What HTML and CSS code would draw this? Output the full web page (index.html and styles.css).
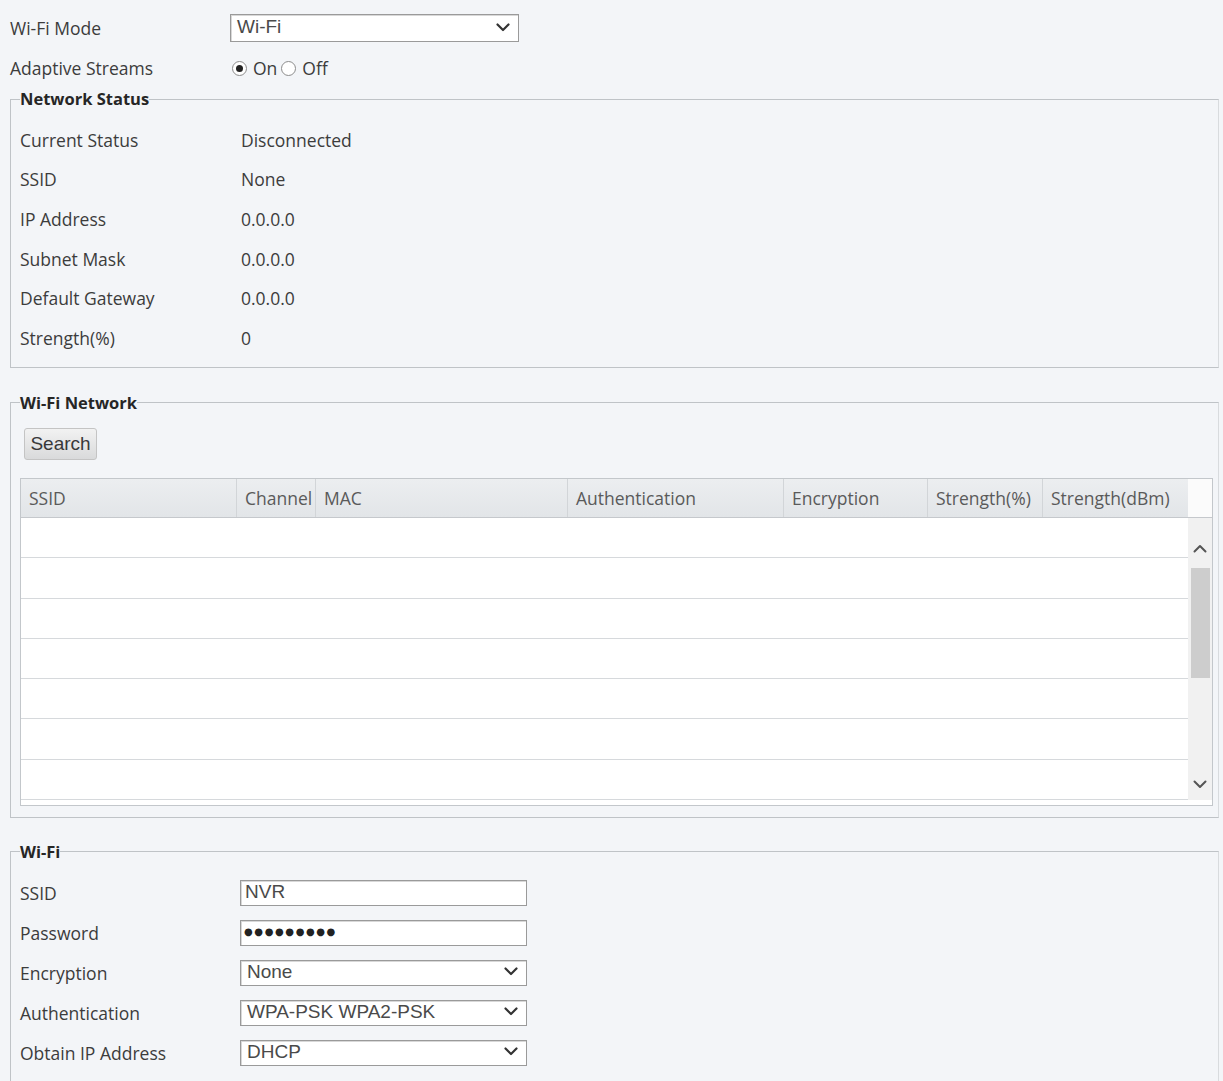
FILE: index.html
```html
<!DOCTYPE html>
<html lang="en">
    <head>
        <meta charset="UTF-8">
        <title>Wi-Fi</title>
        <link rel="stylesheet" href="styles.css">
    </head>
    <body>

        <div class="page">

            <div class="line">
                <span class="label">Wi-Fi Mode</span>
                <div class="field select wide">
                    <span>Wi-Fi</span>
                    <svg class="chev" width="14" height="9" viewBox="0 0 14 9"><polyline points="1.5,1.5 7,7 12.5,1.5"/></svg>
                </div>
            </div>

            <div class="line radios">
                <span class="label">Adaptive Streams</span>
                <span class="radio on"></span><span class="opt">On</span>
                <span class="radio"></span><span class="opt">Off</span>
            </div>

            <fieldset class="box">
                <legend>Network Status</legend>
                <div class="row"><span class="label">Current Status</span><span class="value">Disconnected</span></div>
                <div class="row"><span class="label">SSID</span><span class="value">None</span></div>
                <div class="row"><span class="label">IP Address</span><span class="value">0.0.0.0</span></div>
                <div class="row"><span class="label">Subnet Mask</span><span class="value">0.0.0.0</span></div>
                <div class="row"><span class="label">Default Gateway</span><span class="value">0.0.0.0</span></div>
                <div class="row"><span class="label">Strength(%)</span><span class="value">0</span></div>
            </fieldset>

            <fieldset class="box net">
                <legend>Wi-Fi Network</legend>
                <button class="btn">Search</button>

                <div class="grid">
                    <div class="grid-head">
                        <div class="c1">SSID</div>
                        <div class="c2">Channel</div>
                        <div class="c3">MAC</div>
                        <div class="c4">Authentication</div>
                        <div class="c5">Encryption</div>
                        <div class="c6">Strength(%)</div>
                        <div class="c7">Strength(dBm)</div>
                        <div class="c8"></div>
                    </div>
                    <div class="grid-body">
                        <div class="rows">
                            <div class="r"></div>
                            <div class="r"></div>
                            <div class="r"></div>
                            <div class="r"></div>
                            <div class="r"></div>
                            <div class="r"></div>
                            <div class="r"></div>
                        </div>
                        <div class="scroll">
                            <div class="arrow up">
                                <svg width="14" height="9" viewBox="0 0 14 9"><polyline points="1.5,7.5 7,2 12.5,7.5"/></svg>
                            </div>
                            <div class="thumb"></div>
                            <div class="track"></div>
                            <div class="arrow down">
                                <svg width="14" height="9" viewBox="0 0 14 9"><polyline points="1.5,1.5 7,7 12.5,1.5"/></svg>
                            </div>
                        </div>
                    </div>
                </div>
            </fieldset>

            <fieldset class="box wifi">
                <legend>Wi-Fi</legend>
                <div class="row">
                    <span class="label">SSID</span>
                    <div class="field text">NVR</div>
                </div>
                <div class="row">
                    <span class="label">Password</span>
                    <div class="field text pwd">●●●●●●●●●</div>
                </div>
                <div class="row">
                    <span class="label">Encryption</span>
                    <div class="field select">
                        <span>None</span>
                        <svg class="chev" width="14" height="9" viewBox="0 0 14 9"><polyline points="1.5,1.5 7,7 12.5,1.5"/></svg>
                    </div>
                </div>
                <div class="row">
                    <span class="label">Authentication</span>
                    <div class="field select">
                        <span>WPA-PSK WPA2-PSK</span>
                        <svg class="chev" width="14" height="9" viewBox="0 0 14 9"><polyline points="1.5,1.5 7,7 12.5,1.5"/></svg>
                    </div>
                </div>
                <div class="row">
                    <span class="label">Obtain IP Address</span>
                    <div class="field select">
                        <span>DHCP</span>
                        <svg class="chev" width="14" height="9" viewBox="0 0 14 9"><polyline points="1.5,1.5 7,7 12.5,1.5"/></svg>
                    </div>
                </div>
            </fieldset>

        </div>

    </body>
</html>
```

FILE: styles.css
```css
body {
    margin: 0;
    background: #f3f5f8;
    font-family: 'Open Sans', 'Segoe UI', sans-serif;
    font-size: 17.5px;
    color: #3c3c3c;
    overflow: hidden;
}
.page {
    padding: 14px 4px 0 10px;
}
.line {
    display: flex;
    align-items: center;
    height: 28px;
}
.line .label {
    width: 220px;
}
.radios {
    height: 26px;
    margin-top: 13px;
}
.radio {
    box-sizing: border-box;
    width: 15px;
    height: 15px;
    border: 1px solid #8c8c8c;
    border-radius: 50%;
    background: #fff;
    display: inline-flex;
    align-items: center;
    justify-content: center;
    margin: 0 6px 0 2px;
}
.radio.on::after {
    content: "";
    width: 7px;
    height: 7px;
    border-radius: 50%;
    background: #222;
}
.opt {
    margin-right: 2px;
}

.field {
    box-sizing: border-box;
    width: 287px;
    height: 26px;
    background: #fff;
    border: 1px solid #9a9a9a;
    box-shadow: inset 1px 1px 0 #d8d8d8;
    font-family: 'Liberation Sans', Arial, sans-serif;
    font-size: 19px;
    color: #4a4a4a;
    display: flex;
    align-items: center;
    padding: 0 6px 2px 4px;
}
.field.wide {
    width: 289px;
    height: 28px;
}
.select {
    justify-content: space-between;
    padding-left: 6px;
}
.chev {
    margin-right: 2px;
}
.chev polyline, .arrow polyline {
    fill: none;
    stroke: #333;
    stroke-width: 2.2;
    stroke-linecap: round;
    stroke-linejoin: round;
}
.pwd {
    font-family: 'DejaVu Sans', sans-serif;
    font-size: 10px;
    letter-spacing: 1.6px;
    color: #222;
    padding-left: 3px;
}

.box {
    margin: 7px 0 0 0;
    padding: 0 5px 9px 9px;
    border: 1px solid #bfc3c7;
    border-right-color: #d8dbde;
}
.box legend {
    font-size: 16.5px;
    font-weight: bold;
    color: #262626;
    padding: 0;
    margin-left: 0;
    line-height: 22px;
}
.box + .box {
    margin-top: 24px;
}
.box.net {
    padding-bottom: 11px;
}
.box.wifi {
    margin-top: 23px;
    padding-bottom: 20px;
}
.row {
    display: flex;
    align-items: center;
    height: 39.6px;
}
.box > .row:first-of-type {
    margin-top: 10px;
}
.row .label {
    width: 221px;
}
.wifi .row {
    height: 40px;
}
.wifi .row .label {
    width: 220px;
}

.btn {
    margin: 14px 0 0 4px;
    height: 32px;
    width: 73px;
    border: 1px solid #c4c4c4;
    border-radius: 3px;
    background: linear-gradient(#f2f2f2, #d9dadb);
    font-family: 'Liberation Sans', Arial, sans-serif;
    font-size: 19px;
    color: #383838;
    padding: 0;
    display: block;
}

.grid {
    margin-top: 18px;
    border: 1px solid #c3c7cb;
    background: #fff;
    padding-bottom: 5px;
}
.grid-head {
    display: flex;
    height: 38px;
    border-bottom: 1px solid #c5c8cc;
    color: #5a5a5a;
}
.grid-head div {
    box-sizing: border-box;
    display: flex;
    align-items: center;
    padding-left: 8px;
    background: linear-gradient(#eceef0, #e2e5e8);
    border-right: 1px solid #d2d5d8;
}
.grid-head .c1 { width: 216px; }
.grid-head .c2 { width: 79px; }
.grid-head .c3 { width: 252px; }
.grid-head .c4 { width: 216px; }
.grid-head .c5 { width: 144px; }
.grid-head .c6 { width: 115px; }
.grid-head .c7 { width: 145px; border-right: none; }
.grid-head .c8 {
    flex: 1;
    background: #fbfbfb;
    border-right: none;
}
.grid-body {
    display: flex;
}
.rows {
    flex: 1;
}
.r {
    height: 39px;
    border-bottom: 1px solid #d6d9dc;
}
.r:nth-child(2), .r:nth-child(6) {
    height: 40px;
}
.scroll {
    width: 24px;
    background: #f1f1f1;
    display: flex;
    flex-direction: column;
}
.arrow {
    display: flex;
    align-items: center;
    justify-content: center;
}
.arrow.up {
    height: 50px;
    padding-top: 12px;
    box-sizing: border-box;
}
.arrow.down {
    height: 30px;
}
.arrow polyline {
    stroke: #555;
    stroke-width: 2;
}
.thumb {
    height: 110px;
    margin: 0 2px 0 3px;
    background: #cdcdcd;
}
.track {
    flex: 1;
}
```
